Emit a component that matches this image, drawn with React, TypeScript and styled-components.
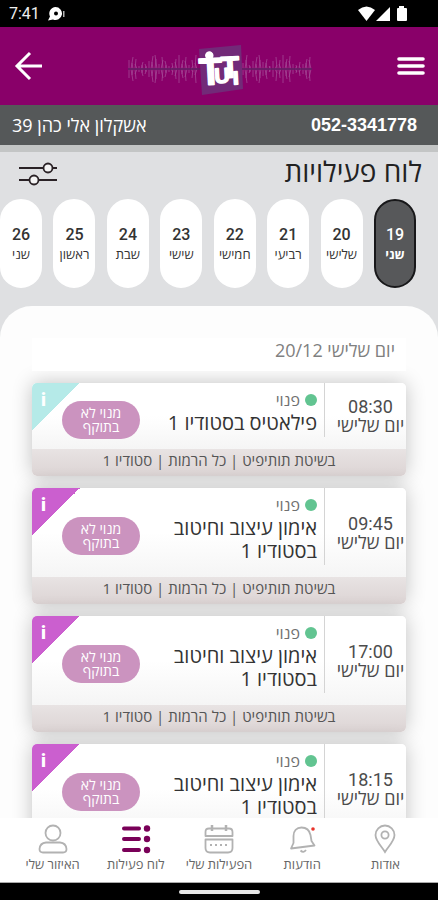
import React, { useState } from "react";
import styled, { createGlobalStyle } from "styled-components";

const GlobalStyle = createGlobalStyle`
  * { box-sizing: border-box; }
  html, body { margin: 0; padding: 0; }
  body {
    font-family: "Open Sans", "Noto Sans", "DejaVu Sans", sans-serif;
    color: #2b2b2b;
  }
  button { font: inherit; color: inherit; border: 0; padding: 0; background: none; cursor: pointer; }
  svg { display: block; }
`;

const Screen = styled.div`
  display: flex;
  flex-direction: column;
  height: 100vh;
  overflow: hidden;
  background: #dfe0e2;
`;

const StatusBar = styled.div`
  display: flex;
  align-items: center;
  justify-content: space-between;
  flex: none;
  height: 27px;
  padding: 0 30px 0 9px;
  background: #000;
  color: #eee;
  font-family: Roboto, sans-serif;
  font-size: 16px;
`;

const StatusGroup = styled.div<{ $gap: number }>`
  display: flex;
  align-items: center;
  gap: ${(p) => p.$gap}px;
`;

const Header = styled.header`
  display: flex;
  align-items: center;
  justify-content: space-between;
  flex: none;
  height: 78px;
  padding: 0 13px;
  background: #890069;
`;

const IconButton = styled.button`
  display: grid;
  place-items: center;
`;

const ContactBar = styled.div`
  display: flex;
  align-items: center;
  justify-content: space-between;
  flex: none;
  height: 40px;
  padding: 0 21px 0 12px;
  background: #555859;
  color: #fff;
  font-size: 18px;
`;

const Phone = styled.a`
  color: inherit;
  font-family: "Liberation Sans", Arial, sans-serif;
  font-weight: 700;
  text-decoration: none;
`;

const Address = styled.span`
  font-size: 18px;
`;

const Schedule = styled.section`
  flex: none;
  padding-bottom: 18px;
  border-top: 7px solid #c3c5c5;
`;

const TitleRow = styled.div`
  display: flex;
  align-items: center;
  justify-content: space-between;
  height: 47px;
  padding: 0 16px 4px 17px;
`;

const Title = styled.h1`
  margin: 0;
  padding-bottom: 6px;
  font-size: 28px;
  line-height: 32px;
  font-weight: 400;
  color: #222;
`;

const Days = styled.div`
  display: flex;
  justify-content: space-between;
  padding-right: 22px;
`;

const Day = styled.button<{ $active: boolean }>`
  display: flex;
  flex-direction: column;
  align-items: center;
  justify-content: center;
  width: 42px;
  height: 89px;
  border-radius: 21px;
  border: 2px solid ${(p) => (p.$active ? "#18181a" : "#fff")};
  background: ${(p) => (p.$active ? "#57585a" : "#fff")};
  color: ${(p) => (p.$active ? "#fff" : "#333")};
`;

const DayNumber = styled.span`
  font-family: Roboto, sans-serif;
  font-size: 16px;
  line-height: 20px;
  font-weight: 500;
`;

const DayName = styled.span<{ $active: boolean }>`
  font-size: 13px;
  line-height: 18px;
  font-weight: ${(p) => (p.$active ? 700 : 400)};
  white-space: nowrap;
`;

const Sheet = styled.main`
  flex: 1;
  min-height: 0;
  overflow: hidden;
  padding: 32px 32px 0;
  border-radius: 32px 32px 0 0;
  background: #fdfdfd;
`;

const List = styled.div`
  display: flex;
  flex-direction: column;
  gap: 12px;
`;

const DateHeading = styled.h2`
  position: relative;
  z-index: 1;
  margin: 0;
  height: 33px;
  padding: 0 11px;
  background: #fff;
  color: #808080;
  font-size: 18px;
  line-height: 24px;
  font-weight: 400;
`;

const Card = styled.article`
  flex: none;
  overflow: hidden;
  border-radius: 5px;
  background: #fff;
`;

const CardShadow = styled.div`
  border-radius: 5px;
  box-shadow: 0 0 20px rgba(0, 0, 0, 0.24);
`;

const CardBody = styled.div`
  display: flex;
  align-items: stretch;
  background: linear-gradient(#fff 50%, #f5f5f5);
`;

const TimeColumn = styled.div`
  display: flex;
  flex-direction: column;
  align-items: center;
  justify-content: center;
  width: 82px;
  margin-bottom: 12px;
  padding: 12px 0 0 10px;
  border-left: 1px solid #d4d4d4;
  color: #4c4c4c;
  font-size: 18px;
  line-height: 18px;
  white-space: nowrap;
`;

const Time = styled.time`
  font-family: Roboto, sans-serif;
`;

const Info = styled.div`
  flex: 1;
  min-width: 0;
  padding: 6px 7px 15px 0;
`;

const Status = styled.div`
  display: flex;
  align-items: center;
  gap: 5px;
  color: #707070;
  font-size: 16px;
  line-height: 22px;
`;

const Dot = styled.span`
  width: 12px;
  height: 12px;
  border-radius: 50%;
  background: #62c491;
`;

const Name = styled.h3`
  margin: 0;
  color: #333;
  font-size: 20px;
  line-height: 23px;
  font-weight: 400;
`;

const ActionArea = styled.div`
  position: relative;
  display: flex;
  align-items: center;
  justify-content: flex-end;
  width: 120px;
  padding: 7px 0 0 30px;
`;

const Corner = styled.button<{ $color: string }>`
  position: absolute;
  top: 0;
  left: 0;
  width: 48px;
  height: 48px;
  background: linear-gradient(135deg, ${(p) => p.$color} 50%, transparent 50%);
`;

const InfoMark = styled.span`
  position: absolute;
  top: 8px;
  left: 9px;
  color: #fff;
  font-family: Roboto, sans-serif;
  font-size: 18px;
  line-height: 18px;
  font-weight: 900;
`;

const Pill = styled.button`
  width: 78px;
  height: 38px;
  border-radius: 19px;
  background: #cb93bf;
  color: #fff;
  font-size: 14px;
  line-height: 14px;
  font-weight: 500;
`;

const CardFooter = styled.div`
  height: 27px;
  background: linear-gradient(#e8e3e3, #dcd4d4);
  color: #555;
  font-size: 15px;
  line-height: 23px;
  text-align: center;
  word-break: keep-all;
`;

const BottomNav = styled.nav`
  position: relative;
  display: grid;
  grid-template-columns: repeat(5, 1fr);
  flex: none;
  height: 65px;
  padding: 6px 11px 0;
  border-bottom: 1px solid #aaa;
  background: #fff;
`;

const NavItem = styled.button`
  display: flex;
  flex-direction: column;
  align-items: center;
  gap: 1px;
  color: #666;
  font-size: 13px;
  line-height: 18px;
  white-space: nowrap;
`;

const SystemBar = styled.div`
  display: grid;
  place-items: center;
  flex: none;
  height: 17px;
  background: #000;
`;

const HomeHandle = styled.span`
  width: 81px;
  height: 4px;
  border-radius: 2px;
  background: #e8e8e8;
`;

const LogoSvg = styled.svg`
  direction: ltr;
`;

const levels = [9, 12, 6, 10, 5, 3, 7, 4, 3, 5, 8, 13, 7, 10, 14, 5, 9, 12, 4, 8, 3, 3, 6, 10, 7, 14, 9, 5, 12, 8, 4, 3, 9, 14, 6];
const leans = [0, 2, -1, 1, -2];

const wave = (start: number, values: number[]) =>
  values
    .map((h, i) => {
      const x = start + i * 2;
      const lean = leans[i % leans.length];
      return `M${x} 33L${x + lean} ${33 - h}M${x} 33L${x + lean} ${33 + h}`;
    })
    .join("");

const Logo = () => (
  <LogoSvg width="188" height="60" viewBox="0 0 188 60" role="img" aria-label="TUTi">
    <path d={wave(3, levels) + wave(117, [...levels].reverse())} stroke="#b678b4" strokeWidth="0.8" opacity="0.6" />
    <path d="M2 33H186" stroke="#5d1c60" strokeWidth="1.5" />
    <path d="M73 13L115 9L117 53L76 59Z" fill="#722a78" />
    <g
      fill="#fff"
      stroke="#fff"
      strokeWidth="1.500"
      strokeLinejoin="round"
      fontFamily="Liberation Sans Narrow, Liberation Sans, Arial, sans-serif"
      fontWeight="700"
      transform="rotate(-3 95 33)"
    >
      <text x="73" y="48" fontSize="38">T</text>
      <text x="88" y="47" fontSize="21">U</text>
      <text x="95" y="42" fontSize="30">T</text>
      <text x="106" y="49" fontSize="24">ı</text>
      <circle cx="84" cy="19" r="3.500" />
    </g>
  </LogoSvg>
);

const BackIcon = () => (
  <svg width="30" height="30" viewBox="0 0 30 30" fill="none" stroke="#fff" strokeWidth="3">
    <path d="M29 15H4M17 2L4 15L17 28" />
  </svg>
);

const MenuIcon = () => (
  <svg width="28" height="20" viewBox="0 0 28 20" stroke="#fff" strokeWidth="3.600" strokeLinecap="round">
    <path d="M2 3H26M2 10H26M2 17H26" />
  </svg>
);

const FilterIcon = () => (
  <svg width="42" height="24" viewBox="0 0 42 24" fill="none" stroke="#2a2226" strokeWidth="1.8">
    <path d="M2 6H26M36 6H40M2 18H12M22 18H40" />
    <circle cx="31" cy="6" r="4.500" fill="#f4f4f4" />
    <circle cx="17" cy="18" r="4.500" fill="#f4f4f4" />
  </svg>
);

const ChatIcon = () => (
  <svg width="17" height="14" viewBox="0 0 17 14" fill="#fff">
    <path d="M7.500 0a6.500 6.500 0 1 1-2.500 12.500L0 13.500 2 9.500A6.500 6.500 0 0 1 7.500 0Z" />
    <circle cx="8" cy="6.500" r="2" fill="#000" />
    <path d="M15 4h1.500v6H15z" opacity=".7" />
  </svg>
);

const SignalIcons = () => (
  <svg width="50" height="16" viewBox="0 0 50 16" fill="#fff">
    <path d="M0 4Q8.500-3 17 4L8.500 15Z" />
    <path d="M32 1V15H18Z" />
    <path d="M41 2V0H46V2H48Q49 2 49 3V14Q49 15 48 15H40Q39 15 39 14V3Q39 2 40 2Z" />
  </svg>
);

const outline = { width: 32, height: 30, viewBox: "0 0 32 30", fill: "none", stroke: "#b2b2b2", strokeWidth: 1.8 };

const PinIcon = () => (
  <svg {...outline}>
    <path d="M16 28C13 23 6.500 17 6.500 11A9.500 9.500 0 0 1 25.500 11C25.500 17 19 23 16 28Z" />
    <circle cx="16" cy="11" r="3.600" />
  </svg>
);

const BellIcon = () => (
  <svg {...outline}>
    <path d="M5 24.500L7.500 19V12C7.500 7 10.500 3.500 15.500 3.500S23.500 6.500 24.500 11L25.500 17L28.500 21.500L5 24.500Z" strokeLinejoin="round" />
    <path d="M14.500 26.500Q17.500 29.500 20 26" />
    <circle cx="27" cy="5" r="1.800" fill="#e8332a" stroke="none" />
  </svg>
);

const CalendarIcon = () => (
  <svg {...outline}>
    <path d="M2.500 12V8Q2.500 4.500 6 4.500H26Q29.500 4.500 29.500 8V12ZM2.500 15.500H29.500V24Q29.500 28.500 25 28.500H7Q2.500 28.500 2.500 24Z" strokeLinejoin="round" />
    <path d="M9 1V7M23 1V7" strokeWidth="2.500" />
    <path d="M7 21H25" strokeDasharray="2 3" />
  </svg>
);

const ListIcon = () => (
  <svg {...outline} stroke="#790058" strokeWidth="4" strokeLinecap="round">
    <path d="M4 4.500H19M4 15H19M4 26H19" />
    <g fill="#790058" stroke="none">
      <circle cx="27" cy="4.500" r="3.200" />
      <circle cx="27" cy="15" r="3.200" />
      <circle cx="27" cy="26" r="3.200" />
    </g>
  </svg>
);

const PersonIcon = () => (
  <svg {...outline}>
    <circle cx="16" cy="9" r="7.500" />
    <path d="M9 18.500H23Q29 19 29.500 25Q29.500 28.500 26 28.500H6Q2.500 28.500 2.500 25Q3 19 9 18.500Z" />
  </svg>
);

const days = [
  ["19", "שני"],
  ["20", "שלישי"],
  ["21", "רביעי"],
  ["22", "חמישי"],
  ["23", "שישי"],
  ["24", "שבת"],
  ["25", "ראשון"],
  ["26", "שני"],
];

const classes = [
  { time: "08:30", name: "פילאטיס בסטודיו 1", color: "#b5eae8" },
  { time: "09:45", name: "אימון עיצוב וחיטוב בסטודיו 1", color: "#cb5fcf" },
  { time: "17:00", name: "אימון עיצוב וחיטוב בסטודיו 1", color: "#cb5fcf" },
  { time: "18:15", name: "אימון עיצוב וחיטוב בסטודיו 1", color: "#cb5fcf" },
];

const tabs = [
  { label: "אודות", icon: <PinIcon /> },
  { label: "הודעות", icon: <BellIcon /> },
  { label: "הפעילות שלי", icon: <CalendarIcon /> },
  { label: "לוח פעילות", icon: <ListIcon /> },
  { label: "האיזור שלי", icon: <PersonIcon /> },
];

export default function App() {
  const [selected, setSelected] = useState(0);
  return (
    <>
      <GlobalStyle />
      <Screen dir="rtl" lang="he">
        <StatusBar dir="ltr">
          <StatusGroup $gap={8}>
            7:41
            <ChatIcon />
          </StatusGroup>
          <SignalIcons />
        </StatusBar>
        <Header>
          <IconButton aria-label="תפריט">
            <MenuIcon />
          </IconButton>
          <Logo />
          <IconButton aria-label="חזרה">
            <BackIcon />
          </IconButton>
        </Header>
        <ContactBar>
          <Phone href="tel:0523341778">052-3341778</Phone>
          <Address>אשקלון אלי כהן 39</Address>
        </ContactBar>
        <Schedule>
          <TitleRow>
            <Title>לוח פעילויות</Title>
            <IconButton aria-label="סינון">
              <FilterIcon />
            </IconButton>
          </TitleRow>
          <Days>
            {days.map(([number, name], i) => (
              <Day key={number} $active={i === selected} aria-pressed={i === selected} onClick={() => setSelected(i)}>
                <DayNumber>{number}</DayNumber>
                <DayName $active={i === selected}>{name}</DayName>
              </Day>
            ))}
          </Days>
        </Schedule>
        <Sheet>
          <List>
            <DateHeading>יום שלישי 20/12</DateHeading>
            {classes.map((c) => (
              <CardShadow key={c.time}>
                <Card>
                  <CardBody>
                    <TimeColumn>
                      <Time>{c.time}</Time>
                      <span>יום שלישי</span>
                    </TimeColumn>
                    <Info>
                      <Status>
                        <Dot />
                        פנוי
                      </Status>
                      <Name>{c.name}</Name>
                    </Info>
                    <ActionArea>
                      <Corner $color={c.color} aria-label="מידע">
                        <InfoMark>i</InfoMark>
                      </Corner>
                      <Pill>
                        מנוי לא
                        <br />
                        בתוקף
                      </Pill>
                    </ActionArea>
                  </CardBody>
                  <CardFooter>בשיטת תותיפיט | כל הרמות | סטודיו 1</CardFooter>
                </Card>
              </CardShadow>
            ))}
          </List>
        </Sheet>
        <BottomNav>
          {tabs.map((t) => (
            <NavItem key={t.label}>
              {t.icon}
              {t.label}
            </NavItem>
          ))}
        </BottomNav>
        <SystemBar>
          <HomeHandle />
        </SystemBar>
      </Screen>
    </>
  );
}
